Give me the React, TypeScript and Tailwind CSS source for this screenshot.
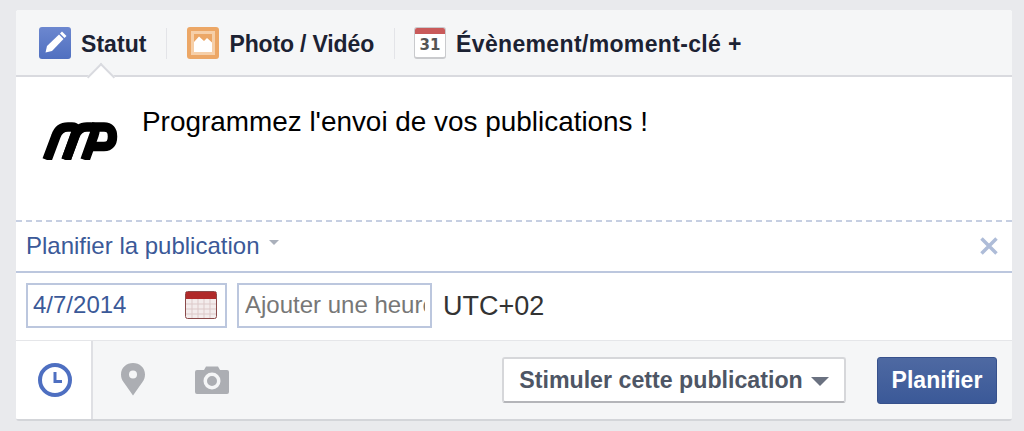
import React from "react";

function Sep() {
  return <div className="w-px h-[31px] bg-[#e3e4e8] mx-[20px]" />;
}

function Logo() {
  return (
    <svg width="76" height="38" viewBox="0 0 76 38" className="block">
      <g fill="none" stroke="#000" strokeWidth="9.5">
        <path d="M5 38 L14 14 Q17 5 26 5 H30 Q36 5 33 13 L24 38" />
        <path d="M24 38 L33 14 Q36 5 45 5 H49 Q55 5 52 13 L43 38" />
        <path d="M50 5 H62 Q70.5 5 70.5 14.5 Q70.5 24.5 62 24.5 H48" />
      </g>
    </svg>
  );
}

export default function App() {
  return (
    <div className="w-[1024px] h-[431px] bg-[#e9eaed] pt-[10px] px-[16px] overflow-hidden font-['Liberation_Sans',Arial,sans-serif]">
      <div className="w-[996px] h-[411px] bg-white rounded-[3px] flex flex-col border-b-2 border-[#d3d5d9] overflow-hidden">
        {/* tabs */}
        <div className="relative h-[67px] bg-[#f5f6f7] border-b-2 border-[#d9dadf] flex items-center pl-[23px] pt-[1px] shrink-0">
          <div className="flex items-center">
            <svg width="32" height="32" viewBox="0 0 32 32" className="mr-[10px]">
              <defs>
                <linearGradient id="a" x1="0" y1="0" x2="0" y2="1">
                  <stop offset="0" stopColor="#6c87cf" />
                  <stop offset="1" stopColor="#5070c0" />
                </linearGradient>
              </defs>
              <rect width="32" height="32" rx="3" fill="url(#a)" />
              <path d="M20 7.5 L24.5 12 L13 24 L6.5 25.5 L8 19 Z" fill="#fff" />
              <path d="M21 6.5 L23 4.5 L27.5 9 L25.5 11 Z" fill="#fff" />
            </svg>
            <span className="text-[23px] font-bold text-[#1c2233] tracking-[0.05px] mt-[2px]">Statut</span>
          </div>
          <Sep />
          <div className="flex items-center">
            <svg width="32" height="32" viewBox="0 0 32 32" className="mr-[10px]">
              <rect width="32" height="32" rx="3" fill="#eca766" />
              <rect x="4" y="4" width="24" height="24" fill="#f6cfa8" />
              <rect x="7" y="7" width="18" height="18" fill="#eca766" />
              <path d="M7 25 V15 L12 9.5 L17 14 L20 11 L25 15.5 V25 Z" fill="#fff" />
            </svg>
            <span className="text-[23px] font-bold text-[#1c2233] tracking-[-0.15px] mt-[2px]">Photo / Vidéo</span>
          </div>
          <div className="w-px h-[31px] bg-[#e3e4e8] ml-[20px] mr-[19px]" />
          <div className="flex items-center">
            <div className="w-[32px] h-[32px] rounded-[3px] bg-white border border-[#c9cacd] border-b-2 mr-[10px] flex flex-col overflow-hidden">
              <div className="h-[6px] bg-[#c95a5a] shrink-0" />
              <div className="flex-1 flex items-center justify-center text-[15px] font-bold text-[#555] font-['DejaVu_Sans',sans-serif] leading-none">31</div>
            </div>
            <span className="text-[23px] font-bold text-[#1c2233] tracking-[0.35px] mt-[2px]">Évènement/moment-clé +</span>
          </div>
          {/* notch */}
          <div className="absolute left-[75px] bottom-[-12px] w-[20px] h-[20px] rotate-45 bg-white border-l-2 border-t-2 border-[#d9dadf]" />
        </div>

        {/* composer */}
        <div className="h-[145px] flex items-start pl-[26px] pt-[45px] shrink-0 border-b-2 border-dashed border-[#c6cfe2]">
          <Logo />
          <span className="text-[27.9px] text-black leading-[32px] ml-[24px] mt-[-16px] whitespace-nowrap">
            Programmez l'envoi de vos publications !
          </span>
        </div>

        {/* schedule */}
        <div className="h-[51px] flex items-center justify-between pl-[10px] pr-[13px] pb-[2px] border-b-2 border-[#bcc7de] shrink-0">
          <div className="flex items-center">
            <span className="text-[24px] text-[#3b5998]">Planifier la publication</span>
            <span className="ml-[10px] mb-[6px] w-0 h-0 border-x-[5px] border-x-transparent border-t-[5px] border-t-[#aab0bb]" />
          </div>
          <svg width="20" height="20" viewBox="0 0 20 20">
            <path d="M2.5 2.5 L17.5 17.5 M17.5 2.5 L2.5 17.5" stroke="#aebcd8" strokeWidth="3.5" />
          </svg>
        </div>

        <div className="h-[67px] flex items-center pl-[10px] pb-[3px] shrink-0">
          <div className="w-[201px] h-[45px] border-2 border-[#bcc7de] flex items-center justify-between pl-[5px] pr-[8px]">
            <span className="text-[24px] text-[#3b5998]">4/7/2014</span>
            <svg width="32" height="28" viewBox="0 0 32 28">
              <rect x="0.5" y="0.5" width="31" height="27" rx="2" fill="#f3ecec" stroke="#8a4a4a" />
              <rect x="1" y="1" width="30" height="7" fill="#b02a2a" />
              <path d="M1 13 H31 M1 18 H31 M1 23 H31 M7 8 V27 M13 8 V27 M19 8 V27 M25 8 V27" stroke="#dcc9c9" strokeWidth="1" />
            </svg>
          </div>
          <input
            readOnly
            placeholder="Ajouter une heure"
            className="w-[195px] h-[45px] ml-[10px] border-2 border-[#bcc7de] pl-[6px] pr-[5px] text-[24px] outline-none placeholder:text-[#777] placeholder:opacity-100"
          />
          <span className="text-[27px] text-[#333] ml-[11px] mt-[3px]">UTC+02</span>
        </div>

        {/* footer */}
        <div className="flex-1 flex items-stretch bg-[#f5f6f7] border-t border-[#e5e6e9]">
          <div className="w-[77px] bg-white border-r-2 border-[#dfe0e4] flex items-center justify-center">
            <svg width="34" height="34" viewBox="0 0 34 34" className="ml-[3px]">
              <circle cx="17" cy="17" r="15" fill="none" stroke="#4e6fc1" strokeWidth="4" />
              <path d="M17 9 V18.5 H24" fill="none" stroke="#4e6fc1" strokeWidth="3" />
            </svg>
          </div>
          <div className="ml-[27px] flex items-center mb-[2px]">
            <svg width="26" height="34" viewBox="0 0 26 34">
              <path fillRule="evenodd" d="M13 33.5 L3.5 20 C2 18 1 15.5 1 12.5 C1 5.5 6.5 1 13 1 C19.5 1 25 5.5 25 12.5 C25 15.5 24 18 22.5 20 Z M13 8.5 A4 4 0 1 0 13 16.5 A4 4 0 1 0 13 8.5 Z" fill="#acaeb3" />
            </svg>
          </div>
          <div className="ml-[49px] flex items-center">
            <svg width="34" height="28" viewBox="0 0 34 28">
              <path fillRule="evenodd" d="M2 4 H9 L11 0.5 H23 L25 4 H32 A2 2 0 0 1 34 6 V26 A2 2 0 0 1 32 28 H2 A2 2 0 0 1 0 26 V6 A2 2 0 0 1 2 4 Z M17 6.5 A8.5 8.5 0 1 0 17 23.5 A8.5 8.5 0 1 0 17 6.5 Z M17 10 A5 5 0 1 1 17 20 A5 5 0 1 1 17 10 Z" fill="#acaeb3" />
            </svg>
          </div>
          <div className="ml-auto mr-[15px] flex items-center gap-[31px]">
            <button className="w-[344px] h-[46px] bg-white border-2 border-[#d6d7da] border-b-[#b4b5b9] rounded-[3px] flex items-center justify-center text-[23.2px] font-bold text-[#4e5665]">
              Stimuler cette publication
              <span className="ml-[8px] mt-[2px] w-0 h-0 border-x-[9px] border-x-transparent border-t-[9px] border-t-[#6a7180]" />
            </button>
            <button className="w-[120px] h-[47px] rounded-[3px] border border-[#37518c] bg-gradient-to-b from-[#4e69a2] to-[#3b5998] text-white text-[23px] font-bold">
              Planifier
            </button>
          </div>
        </div>
      </div>
    </div>
  );
}
